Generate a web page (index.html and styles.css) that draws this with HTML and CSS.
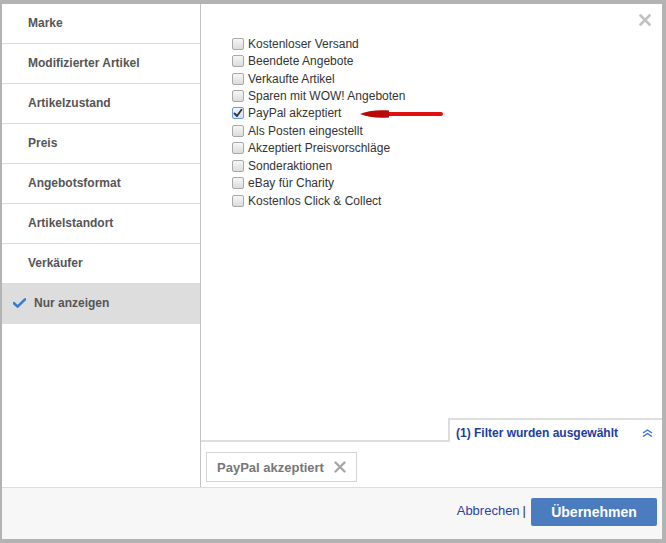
FILE: index.html
```html
<!DOCTYPE html>
<html lang="de">
<head>
<meta charset="utf-8">
<title>Filter</title>
<link rel="stylesheet" href="styles.css">
</head>
<body>
<div class="dialog">
  <div class="main">
    <ul class="sidebar">
      <li class="item">Marke</li>
      <li class="item">Modifizierter Artikel</li>
      <li class="item">Artikelzustand</li>
      <li class="item">Preis</li>
      <li class="item">Angebotsformat</li>
      <li class="item">Artikelstandort</li>
      <li class="item">Verkäufer</li>
      <li class="item active">
        <svg class="tick" width="13" height="10" viewBox="0 0 13 10"><path d="M1 5.2 L4.6 8.6 L12 1.4" fill="none" stroke="#3a7bd0" stroke-width="2.6" stroke-linecap="round" stroke-linejoin="round"/></svg>
        Nur anzeigen
      </li>
    </ul>
    <div class="panel">
      <svg class="close" width="12" height="12" viewBox="0 0 12 12"><path d="M1.5 1.5 L10.5 10.5 M10.5 1.5 L1.5 10.5" stroke="#c2c2c2" stroke-width="2.6" stroke-linecap="round"/></svg>
      <div class="options">
        <div class="opt"><span class="box"></span>Kostenloser Versand</div>
        <div class="opt"><span class="box"></span>Beendete Angebote</div>
        <div class="opt"><span class="box"></span>Verkaufte Artikel</div>
        <div class="opt"><span class="box"></span>Sparen mit WOW! Angeboten</div>
        <div class="opt"><span class="box checked"><svg width="10" height="10" viewBox="0 0 10 10"><path d="M1.5 5.5 L4 8 L8.5 1.8" fill="none" stroke="#333" stroke-width="1.8" stroke-linecap="round" stroke-linejoin="round"/></svg></span>PayPal akzeptiert</div>
        <div class="opt"><span class="box"></span>Als Posten eingestellt</div>
        <div class="opt"><span class="box"></span>Akzeptiert Preisvorschläge</div>
        <div class="opt"><span class="box"></span>Sonderaktionen</div>
        <div class="opt"><span class="box"></span>eBay für Charity</div>
        <div class="opt"><span class="box"></span>Kostenlos Click &amp; Collect</div>
      </div>
      <svg class="arrow" width="84" height="14" viewBox="0 0 84 14"><path d="M20 7 L82 7" stroke="#e01010" stroke-width="4" stroke-linecap="round"/><path d="M1 7 C8 4 18 2.5 30 3.5 L30 10.5 C18 11.5 8 10 1 7 Z" fill="#b80808"/></svg>
      <div class="tabrow">
        <div class="tabfill"></div>
        <div class="tab">
          <span class="tabtext">(1) Filter wurden ausgewählt</span>
          <svg class="chev" width="11" height="8" viewBox="0 0 11 8"><path d="M1 4 L5.5 1 L10 4 M1 7.5 L5.5 4.5 L10 7.5" fill="none" stroke="#3a6fd0" stroke-width="1.4"/></svg>
        </div>
      </div>
      <div class="tags">
        <span class="tag">PayPal akzeptiert
          <svg class="tagx" width="12" height="12" viewBox="0 0 12 12"><path d="M1.5 1.5 L10.5 10.5 M10.5 1.5 L1.5 10.5" stroke="#a6a6a6" stroke-width="2.4" stroke-linecap="round"/></svg>
        </span>
      </div>
    </div>
  </div>
  <div class="footer">
    <a class="cancel" href="#">Abbrechen</a><span class="sep">|</span>
    <button class="apply" type="button">Übernehmen</button>
  </div>
</div>
</body>
</html>
```
FILE: styles.css
```css
html, body {
  margin: 0;
  padding: 0;
}
body {
  background: #b3b3b3;
  font-family: "Liberation Sans", Arial, sans-serif;
  width: 666px;
  height: 543px;
  overflow: hidden;
}
.dialog {
  margin: 4px 4px 0 2px;
  width: 660px;
  height: 535px;
  background: #fff;
  display: flex;
  flex-direction: column;
}
.main {
  flex: 1;
  display: flex;
  min-height: 0;
}
.sidebar {
  list-style: none;
  margin: 0;
  padding: 0;
  width: 198px;
  border-right: 1px solid #c4c4c4;
}
.item {
  border-bottom: 1px solid #dcdcdc;
  display: flex;
  align-items: center;
  padding: 0 0 2px 26px;
  box-sizing: border-box;
  height: 40px;
  font-size: 12px;
  font-weight: bold;
  color: #555;
}
.item.active {
  background: #dddddd;
  padding-left: 11px;
  border-bottom: none;
  color: #555;
}
.tick {
  margin-right: 8px;
}
.panel {
  flex: 1;
  display: flex;
  flex-direction: column;
  position: relative;
}
.close {
  position: absolute;
  top: 10px;
  right: 11px;
}
.arrow {
  position: absolute;
  left: 158px;
  top: 103px;
}
.options {
  flex: 1;
  padding: 31px 0 0 31px;
}
.opt {
  height: 17.45px;
  display: flex;
  align-items: center;
  font-size: 12px;
  color: #333;
}
.box {
  width: 10px;
  height: 10px;
  border: 1px solid #a9a9a9;
  border-radius: 2px;
  background: linear-gradient(#f6f6f6, #dcdcdc);
  margin-right: 4px;
  display: flex;
  align-items: center;
  justify-content: center;
}
.box.checked {
  border-color: #6e9be0;
  background: linear-gradient(#eef3fb, #d6e0ef);
}
.tabrow {
  display: flex;
  height: 24px;
}
.tabfill {
  flex: 1;
  border-bottom: 2px solid #dddddd;
}
.tab {
  width: 197px;
  border-top: 2px solid #dddddd;
  border-left: 2px solid #dddddd;
  display: flex;
  align-items: center;
  justify-content: space-between;
  padding: 3px 9px 0 6px;
  box-sizing: content-box;
}
.tabtext {
  font-size: 12px;
  font-weight: bold;
  color: #1b3d9e;
}
.chev {
  margin-top: 1px;
}
.tags {
  height: 45px;
  padding: 10px 0 0 5px;
  box-sizing: border-box;
}
.tag {
  display: inline-flex;
  align-items: center;
  height: 28px;
  border: 1px solid #d4d4d4;
  padding: 0 10px 0 10px;
  font-size: 13px;
  font-weight: bold;
  color: #777;
}
.tagx {
  margin-left: 10px;
}
.footer {
  height: 52px;
  border-top: 1px solid #dddddd;
  background: #f7f7f7;
  display: flex;
  align-items: center;
  justify-content: flex-end;
  padding: 0 5px 3px 0;
  box-sizing: border-box;
}
.cancel {
  font-size: 13px;
  color: #2f3ea6;
  text-decoration: none;
  margin-bottom: 3px;
}
.sep {
  font-size: 13px;
  color: #333;
  margin: 0 5px 3px 3px;
}
.apply {
  width: 126px;
  height: 28px;
  border: none;
  border-radius: 2px;
  background: #4a7cbf;
  color: #fff;
  font-family: "Liberation Sans", Arial, sans-serif;
  font-size: 14px;
  font-weight: bold;
  padding: 0;
}
```
